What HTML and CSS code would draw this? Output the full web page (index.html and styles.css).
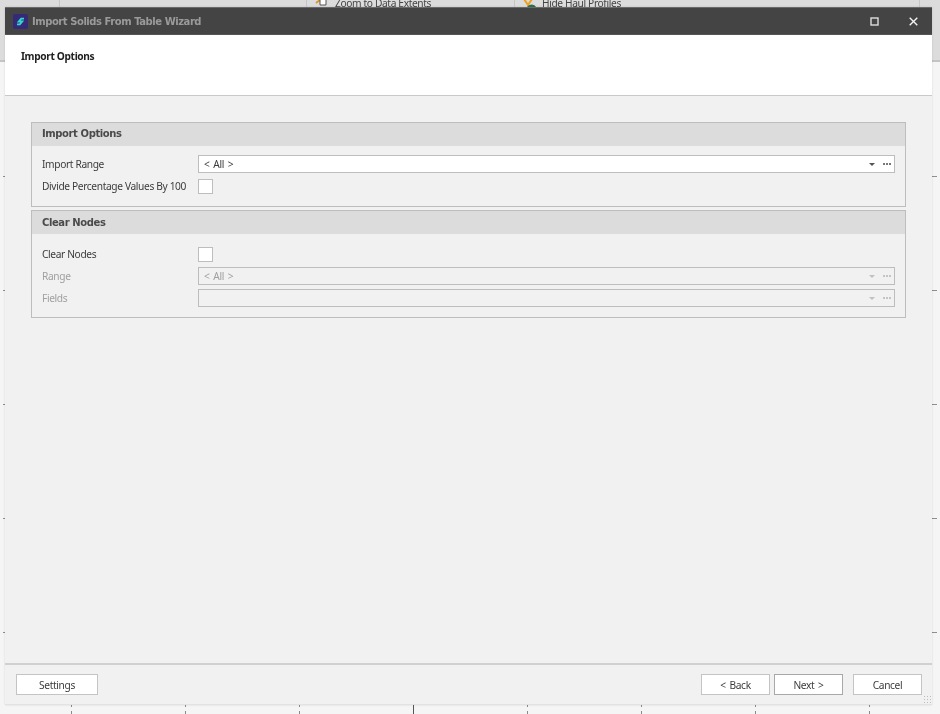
FILE: index.html
```html
<!DOCTYPE html>
<html lang="en">
<head>
<meta charset="utf-8">
<title>Import Solids From Table Wizard</title>
<link rel="stylesheet" href="styles.css">
</head>
<body>
<div class="app">
  <div class="ribbon">
    <div class="ribbon-cell cell-a"></div>
    <div class="ribbon-cell cell-b"></div>
    <div class="ribbon-cell cell-c">
      <svg class="ribbon-icon" width="16" height="12" viewBox="0 0 16 12"><path d="M1 6l4-3" stroke="#d99a2b" stroke-width="2"/><path d="M5 8V2h6v6z" fill="#fff" stroke="#555"/></svg>
      <span>Zoom to Data Extents</span>
    </div>
    <div class="ribbon-cell cell-d">
      <svg class="ribbon-icon" width="18" height="12" viewBox="0 0 18 12"><path d="M1 2l4 6 4-6" fill="none" stroke="#eea020" stroke-width="2"/><path d="M4 9.500q5-4 9 0q-4 2.500-9 0z" fill="#2f6f4f"/></svg>
      <span>Hide Haul Profiles</span>
    </div>
  </div>
  <div class="ticks-left"></div>
  <div class="ticks-right"></div>
  <div class="ticks-bottom"></div>

  <div class="window">
    <header class="titlebar">
      <svg class="logo" width="15" height="15" viewBox="0 0 15 15">
        <rect width="15" height="15" rx="2" fill="#352a78"/>
        <path d="M11 4.600H8.200L5.800 7.500h3.400L6.800 10.400H4" fill="none" stroke="#35d6cf" stroke-width="1.900"/>
      </svg>
      <span class="title">Import Solids From Table Wizard</span>
      <svg class="win-btn max" width="9" height="9" viewBox="0 0 9 9"><rect x="1" y="1" width="7" height="7" fill="none" stroke="#ddd" stroke-width="1.400"/></svg>
      <svg class="win-btn close" width="9" height="9" viewBox="0 0 9 9"><path d="M.7.7l7.600 7.600M8.300.7L.7 8.300" stroke="#f2f2f2" stroke-width="1.400"/></svg>
    </header>
    <div class="page-head">Import Options</div>
    <main class="content">
      <section class="group first">
        <h2 class="group-title">Import Options</h2>
        <div class="group-body">
          <div class="row">
            <span class="label">Import Range</span>
            <div class="combo">
              <span class="combo-text">&lt; All &gt;</span>
              <span class="arrow"></span>
              <span class="dots"><i></i><i></i><i></i></span>
            </div>
          </div>
          <div class="row">
            <span class="label">Divide Percentage Values By 100</span>
            <span class="check"></span>
          </div>
        </div>
      </section>
      <section class="group second">
        <h2 class="group-title">Clear Nodes</h2>
        <div class="group-body">
          <div class="row">
            <span class="label">Clear Nodes</span>
            <span class="check"></span>
          </div>
          <div class="row disabled">
            <span class="label">Range</span>
            <div class="combo">
              <span class="combo-text">&lt; All &gt;</span>
              <span class="arrow"></span>
              <span class="dots"><i></i><i></i><i></i></span>
            </div>
          </div>
          <div class="row disabled">
            <span class="label">Fields</span>
            <div class="combo">
              <span class="combo-text"></span>
              <span class="arrow"></span>
              <span class="dots"><i></i><i></i><i></i></span>
            </div>
          </div>
        </div>
      </section>
    </main>
    <footer class="footer">
      <button class="btn settings" type="button">Settings</button>
      <button class="btn back" type="button">&lt; Back</button>
      <button class="btn next" type="button">Next &gt;</button>
      <button class="btn cancel" type="button">Cancel</button>
      <span class="grip"></span>
    </footer>
  </div>
</div>
</body>
</html>
```
FILE: styles.css
```css
* { box-sizing: border-box; }
html, body { margin: 0; height: 100%; }
body {
  font-family: "Noto Sans", "Liberation Sans", sans-serif;
  font-size: 10.2px;
  letter-spacing: -.36px;
  color: #3c3c3c;
  overflow: hidden;
}
.app {
  position: relative;
  width: 940px;
  height: 714px;
  background: #f5f5f5;
  overflow: hidden;
  filter: blur(.35px);
}
.ribbon {
  display: flex;
  height: 62px;
  background: #dcdcdc;
  border-bottom: 2px solid #c4c4c4;
  overflow: hidden;
}
.ribbon-cell {
  display: flex;
  gap: 4px;
  align-items: flex-start;
  height: 100%;
  border-right: 1px solid #c6c6c6;
  color: #444;
  line-height: 12px;
}
.ribbon-cell span { margin-top: -3px; }
.ribbon-icon { margin-top: -3px; flex: none; }
.cell-a { width: 60px; }
.cell-b { width: 247px; }
.cell-c { width: 208px; padding-left: 8px; }
.cell-d { width: 405px; padding-left: 8px; gap: 1px; }
.ticks-left, .ticks-right {
  position: absolute;
  top: 176px;
  height: 460px;
  background: repeating-linear-gradient(to bottom, #8e8e8e 0 1px, transparent 1px 114px);
}
.ticks-left { left: 3px; width: 2px; }
.ticks-right { left: 932px; width: 5px; }
.ticks-bottom {
  position: absolute;
  left: 71px;
  right: 0;
  top: 705px;
  height: 9px;
  background: repeating-linear-gradient(to right, #8a8a8a 0 1px, transparent 1px 114px);
}
.ticks-bottom::before {
  content: "";
  position: absolute;
  left: 0;
  right: 0;
  top: 2px;
  height: 4px;
  background: #f5f5f5;
}
.ticks-bottom::after {
  content: "";
  position: absolute;
  left: 342px;
  top: 0;
  width: 1px;
  height: 9px;
  background: #555;
}
.window {
  position: absolute;
  left: 5px;
  top: 7px;
  width: 927px;
  height: 698px;
  display: flex;
  flex-direction: column;
  background: #f1f1f1;
  border-bottom: 1px solid #e2e2e2;
  box-shadow: 0 0 2px rgba(0, 0, 0, .12);
}
.titlebar {
  display: flex;
  align-items: center;
  flex: none;
  height: 28px;
  padding-left: 8px;
  background: #444;
  border-top: 1px solid #6a6a6a;
  border-bottom: 1px solid #555;
}
.logo { flex: none; }
.title {
  margin-left: 4px;
  font-family: "DejaVu Sans", sans-serif;
  font-weight: 700;
  font-size: 10px;
  letter-spacing: -.45px;
  color: #9a9a9a;
  flex: 1;
}
.win-btn { flex: none; }
.max { margin-right: 30px; }
.close { margin-right: 14px; }
.page-head {
  flex: none;
  height: 61px;
  padding: 14px 0 0 16px;
  background: #fff;
  border-bottom: 1px solid #c9c9c9;
  font-weight: 700;
  line-height: 14px;
  color: #222;
}
.content {
  flex: 1;
  padding: 26px 26px 0;
  display: flex;
  flex-direction: column;
  gap: 3px;
}
.group {
  border: 1px solid #bdbdbd;
  width: 875px;
}
.group.first { height: 85px; }
.group.second { height: 108px; }
.group-title {
  margin: 0;
  height: 23px;
  padding-left: 10px;
  background: #dcdcdc;
  font-family: "DejaVu Sans", sans-serif;
  font-weight: 700;
  font-size: 10px;
  letter-spacing: -.4px;
  line-height: 21px;
  color: #4a4a4a;
}
.second .group-title { line-height: 23px; }
.group-body {
  display: flex;
  flex-direction: column;
  gap: 4px;
  padding: 9px 10px 0 10px;
}
.second .group-body { padding-top: 11px; }
.row {
  display: flex;
  align-items: center;
  height: 18px;
}
.label {
  width: 156px;
  flex: none;
  white-space: nowrap;
}
.combo {
  flex: 1;
  height: 18px;
  display: flex;
  align-items: center;
  padding: 0 3px 0 5px;
  background: #fff;
  border: 1px solid #bdbdbd;
}
.combo-text { flex: 1; word-spacing: 1.5px; }
.arrow {
  width: 0;
  height: 0;
  margin-right: 8px;
  border-left: 3px solid transparent;
  border-right: 3px solid transparent;
  border-top: 3px solid #555;
}
.dots { display: flex; gap: 1px; }
.dots i {
  width: 2px;
  height: 2px;
  background: #777;
}
.check {
  width: 15px;
  height: 15px;
  background: #fff;
  border: 1px solid #bdbdbd;
}
.disabled { color: #a0a0a0; }
.disabled .combo { background: #f1f1f1; }
.disabled .arrow { border-top-color: #c0c0c0; }
.disabled .dots i { background: #c4c4c4; }
.footer {
  position: relative;
  flex: none;
  height: 41px;
  display: flex;
  align-items: flex-start;
  padding: 9px 10px 0 11px;
  border-top: 2px solid #d0d0d0;
}
.btn {
  height: 21px;
  width: 69px;
  padding: 0;
  background: #fff;
  border: 1px solid #c4c4c4;
  font: inherit;
  letter-spacing: inherit;
  word-spacing: 1.5px;
  color: #3c3c3c;
}
.settings { width: 82px; margin-right: auto; }
.next { margin-left: 4px; border-color: #a8a8a8; }
.cancel { margin-left: 10px; }
.grip {
  position: absolute;
  right: 0;
  bottom: 0;
  width: 9px;
  height: 9px;
  background-image: radial-gradient(#bcbcbc 1px, transparent 1px);
  background-size: 3px 3px;
}
```
